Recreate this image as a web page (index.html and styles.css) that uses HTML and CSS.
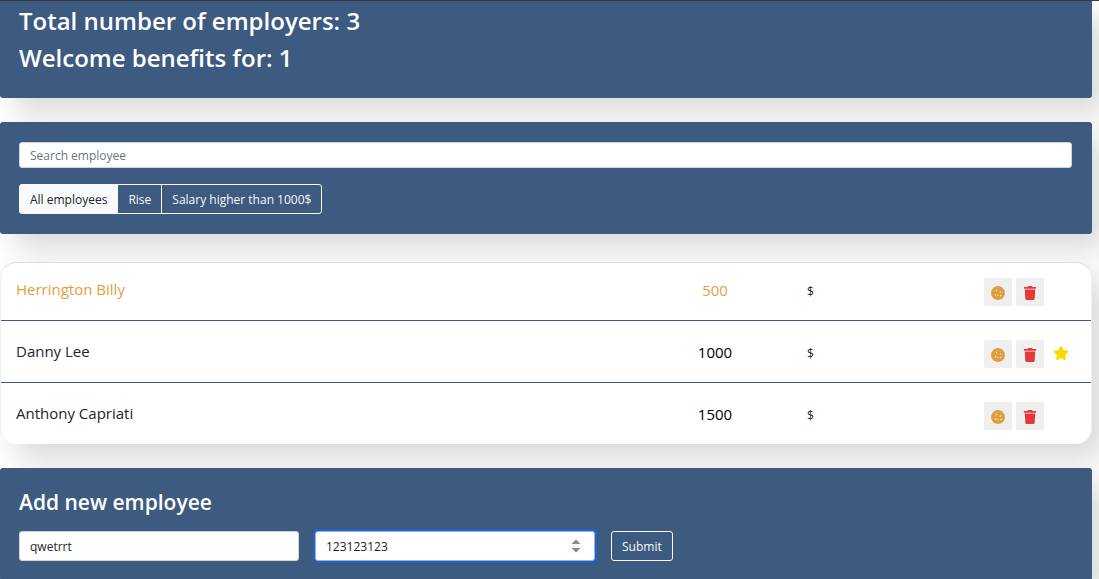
FILE: index.html
```html
<!DOCTYPE html>
<html lang="en">
<head>
<meta charset="utf-8">
<meta name="viewport" content="width=device-width, initial-scale=1">
<title>Employees</title>
<link rel="stylesheet" href="styles.css">
</head>
<body>
<svg class="sprite" aria-hidden="true">
  <symbol id="cookie" viewBox="0 0 14 14"><path fill-rule="evenodd" d="M4.700 .4Q7 -.5 9.300 .4Q11.500 .9 12.600 2.900Q14 4.600 13.900 7Q14 9.500 12.600 11.200Q11.400 13.200 9.200 13.600Q7 14.400 4.800 13.500Q2.500 13 1.300 11Q0 9.300 .1 7Q0 4.600 1.400 2.900Q2.500 .9 4.700 .4ZM5.500 3.800a.7.7 0 1 0 .01 0ZM9.400 5.200a.7.7 0 1 0 .01 0ZM4.600 8.100a.7.7 0 1 0 .01 0ZM7 8.900a.5.500 0 1 0 .01 0ZM9.800 8.700a.7.7 0 1 0 .01 0Z"/></symbol>
  <symbol id="trash" viewBox="0 0 448 512"><path d="M432 32H312l-9.400-18.700A24 24 0 0 0 281.100 0H166.800a23.720 23.720 0 0 0-21.400 13.300L136 32H16A16 16 0 0 0 0 48v32a16 16 0 0 0 16 16h416a16 16 0 0 0 16-16V48a16 16 0 0 0-16-16zM53.200 467a48 48 0 0 0 47.900 45h245.800a48 48 0 0 0 47.900-45L416 128H32z"/></symbol>
  <symbol id="star" viewBox="0 0 576 512"><path d="M259.300 17.800L194 150.200 47.900 171.500c-26.200 3.800-36.700 36.100-17.700 54.600l105.700 103-25 145.500c-4.500 26.300 23.200 46 46.400 33.700L288 439.600l130.700 68.700c23.200 12.200 50.900-7.400 46.400-33.700l-25-145.500 105.700-103c19-18.500 8.500-50.800-17.700-54.600L382 150.200 316.700 17.800c-11.700-23.600-45.600-23.900-57.400 0z"/></symbol>
</svg>
<div class="app">
  <header class="panel info">
    <h1>Total number of employers: 3</h1>
    <h2>Welcome benefits for: 1</h2>
  </header>

  <section class="panel search">
    <input class="field search-field" type="text" placeholder="Search employee" aria-label="Search employee">
    <div class="filters">
      <button class="btn active" type="button">All employees</button>
      <button class="btn" type="button">Rise</button>
      <button class="btn" type="button">Salary higher than 1000$</button>
    </div>
  </section>

  <ul class="list">
    <li class="row increase">
      <span class="name">Herrington Billy</span>
      <input class="salary" type="text" value="500" aria-label="Salary of Herrington Billy">
      <span class="currency">$</span>
      <div class="actions">
        <button class="action cookie" type="button" aria-label="Give a bonus"><svg><use href="#cookie"/></svg></button>
        <button class="action trash" type="button" aria-label="Delete"><svg><use href="#trash"/></svg></button>
      </div>
    </li>
    <li class="row">
      <span class="name">Danny Lee</span>
      <input class="salary" type="text" value="1000" aria-label="Salary of Danny Lee">
      <span class="currency">$</span>
      <div class="actions">
        <button class="action cookie" type="button" aria-label="Give a bonus"><svg><use href="#cookie"/></svg></button>
        <button class="action trash" type="button" aria-label="Delete"><svg><use href="#trash"/></svg></button>
        <svg class="star"><use href="#star"/></svg>
      </div>
    </li>
    <li class="row">
      <span class="name">Anthony Capriati</span>
      <input class="salary" type="text" value="1500" aria-label="Salary of Anthony Capriati">
      <span class="currency">$</span>
      <div class="actions">
        <button class="action cookie" type="button" aria-label="Give a bonus"><svg><use href="#cookie"/></svg></button>
        <button class="action trash" type="button" aria-label="Delete"><svg><use href="#trash"/></svg></button>
      </div>
    </li>
  </ul>

  <section class="panel add">
    <h3>Add new employee</h3>
    <form class="add-form">
      <input class="field" type="text" value="qwetrrt" aria-label="Name">
      <input class="field focused" type="number" value="123123123" aria-label="Salary">
      <button class="btn" type="button">Submit</button>
    </form>
  </section>
</div>
</body>
</html>
```
FILE: styles.css
```css
* {
  box-sizing: border-box;
}

body {
  margin: 0;
  border-top: 1px solid #3a3a3a;
  background: #fff;
  color: #212529;
  font-family: "Segoe UI", "Open Sans", "Noto Sans", sans-serif;
  font-size: 12px;
  overflow-x: hidden;
}

button,
input {
  font: inherit;
  color: inherit;
}

.sprite {
  display: none;
}

.app {
  margin-right: 7px;
}

.panel {
  padding: 20px 20px 20px 19px;
  border-radius: 3px;
  background: #3d5a80;
  box-shadow: 15px 15px 30px rgba(0, 0, 0, .15);
  color: #fff;
}

.info {
  padding-top: 5px;
  padding-bottom: 25px;
  border-top-left-radius: 0;
  border-top-right-radius: 0;
}

h1,
h2,
h3 {
  margin: 0;
  font-weight: 600;
}

h1,
h2 {
  font-size: 24px;
  line-height: 30px;
}

h1 {
  margin-bottom: 7px;
}

h3 {
  margin-bottom: 15px;
  font-size: 21px;
  line-height: 28px;
}

.search {
  margin-top: 24px;
}

.field {
  height: 30px;
  padding: 0 10px;
  border: 1px solid #ced4da;
  border-radius: 3px;
  outline: 0;
  background: #fff;
  color: #212529;
}

.field::placeholder {
  color: #6c757d;
}

.search-field {
  display: block;
  width: 100%;
  height: 26px;
}

.filters {
  display: flex;
  margin-top: 16px;
}

.btn {
  height: 30px;
  padding: 0 10px;
  border: 1px solid #f8f9fa;
  border-radius: 3px;
  background: transparent;
  color: #f8f9fa;
  white-space: nowrap;
}

.btn.active {
  background: #f8f9fa;
  color: #212529;
}

.filters .btn:not(:first-child) {
  margin-left: -1px;
  border-top-left-radius: 0;
  border-bottom-left-radius: 0;
}

.filters .btn:not(:last-child) {
  border-top-right-radius: 0;
  border-bottom-right-radius: 0;
}

.list {
  margin: 28px 0 24px;
  padding: 0;
  border: 1px solid #eee;
  border-top-color: #dfdfdf;
  border-bottom: 0;
  border-radius: 16px;
  background: #fff;
  box-shadow: 15px 15px 30px rgba(0, 0, 0, .15);
  list-style: none;
}

.row {
  display: flex;
  align-items: flex-start;
  height: 62px;
  padding: 15px 15px 0;
  border-bottom: 1px solid #3d5a80;
}

.row:first-child {
  height: 58px;
  padding-top: 11px;
}

.row:last-child {
  height: 61px;
  border-bottom: 0;
}

.name {
  flex: 1;
  font-size: 15px;
  line-height: 30px;
}

.salary {
  width: 160px;
  height: 32px;
  padding: 0;
  border: 0;
  background: transparent;
  font-size: 15px;
  text-align: center;
  color: #000;
}

.increase .name,
.increase .salary {
  color: #e09f3e;
}

.currency {
  width: 189px;
  padding-left: 12px;
  line-height: 36px;
}

.actions {
  display: flex;
  gap: 4px;
  width: 92px;
  padding-top: 4px;
}

.action {
  display: grid;
  place-items: center;
  width: 28px;
  height: 28px;
  padding: 1px 0 0;
  border: 0;
  border-radius: 2px;
  background: #efefef;
}

.action svg {
  width: 14px;
  height: 14px;
  fill: currentColor;
}

.cookie {
  color: #e09f3e;
}

.trash {
  color: #e5383b;
}

.star {
  width: 16px;
  height: 14px;
  margin: 6px 0 0 5px;
  fill: #ffd700;
}

.add-form {
  display: flex;
  gap: 16px;
}

.add-form .field {
  width: 280px;
}

.field.focused {
  border-color: #86b7fe;
  box-shadow: 0 0 0 2px #2b62b5;
}

.focused::-webkit-inner-spin-button {
  opacity: 1;
}
```
